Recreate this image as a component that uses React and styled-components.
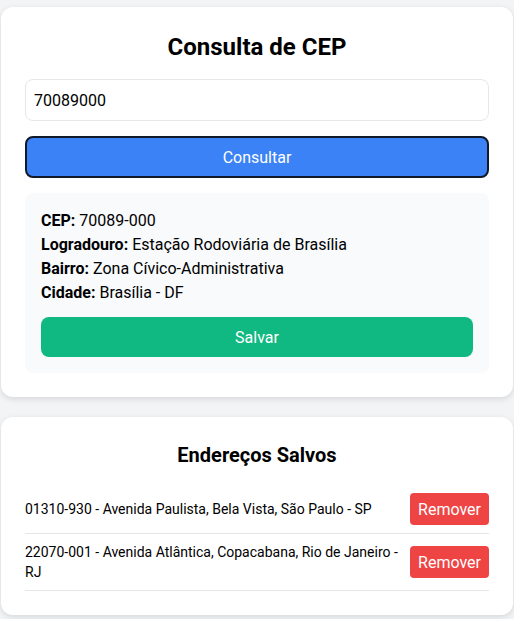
import React, { useState } from "react";
import styled, { createGlobalStyle } from "styled-components";

const Global = createGlobalStyle`
  html, body { margin: 0; padding: 0; background: #f3f4f6; }
  body { font-family: Roboto, "Liberation Sans", sans-serif; color: #000; }
  * { box-sizing: border-box; }
`;

const Page = styled.div`
  max-width: 512px;
  margin: 0 auto;
  padding: 7px 0;
  display: flex;
  flex-direction: column;
  gap: 20px;
`;

const Card = styled.section`
  background: #fff;
  border-radius: 12px;
  box-shadow: 0 2px 6px rgba(0, 0, 0, 0.12);
  padding: 24px;
  display: flex;
  flex-direction: column;
`;

const Title = styled.h1`
  margin: 0 0 ${(p) => p.$gap}px;
  font-size: ${(p) => p.$size}px;
  line-height: ${(p) => p.$lh}px;
  font-weight: 700;
  text-align: center;
`;

const Input = styled.input`
  width: 100%;
  height: 42px;
  padding: 8px;
  font: inherit;
  font-size: 16px;
  line-height: 24px;
  border: 1px solid #e5e7eb;
  border-radius: 8px;
  color: #000;
  outline: none;
`;

const Button = styled.button`
  width: ${(p) => (p.$auto ? "auto" : "100%")};
  height: ${(p) => p.$h}px;
  padding: 0 ${(p) => (p.$auto ? 8 : 12)}px;
  font: inherit;
  font-size: 16px;
  color: #fff;
  background: ${(p) => p.$bg};
  border: ${(p) => (p.$focus ? "2px solid #111827" : "none")};
  border-radius: ${(p) => p.$r}px;
  cursor: pointer;
  flex-shrink: 0;
`;

const Result = styled.div`
  margin-top: 15px;
  background: #f8fafc;
  border-radius: 8px;
  padding: 16px;
  display: flex;
  flex-direction: column;
`;

const Line = styled.p`
  margin: 0;
  font-size: 16px;
  line-height: 24px;
  b { font-weight: 700; }
`;

const SaveWrap = styled.div`
  margin-top: 12px;
`;

const Spacer = styled.div`
  height: ${(p) => p.$h}px;
`;

const List = styled.ul`
  list-style: none;
  margin: 0;
  padding: 0;
`;

const Row = styled.li`
  display: flex;
  align-items: center;
  justify-content: space-between;
  gap: 8px;
  padding: 8px 0;
  border-bottom: 1px solid #e5e7eb;
`;

const RowText = styled.span`
  font-size: 14px;
  line-height: 20px;
  flex: 1;
`;

export default function App() {
  const [cep, setCep] = useState("70089000");
  const saved = [
    "01310-930 - Avenida Paulista, Bela Vista, São Paulo - SP",
    "22070-001 - Avenida Atlântica, Copacabana, Rio de Janeiro - RJ",
  ];
  return (
    <>
      <Global />
      <Page>
        <Card>
          <Title $size={24} $lh={32} $gap={16}>Consulta de CEP</Title>
          <Input value={cep} onChange={(e) => setCep(e.target.value)} />
          <Spacer $h={15} />
          <Button $bg="#3b82f6" $h={42} $r={8} $focus>Consultar</Button>
          <Result>
            <Line><b>CEP:</b> 70089-000</Line>
            <Line><b>Logradouro:</b> Estação Rodoviária de Brasília</Line>
            <Line><b>Bairro:</b> Zona Cívico-Administrativa</Line>
            <Line><b>Cidade:</b> Brasília - DF</Line>
            <SaveWrap>
              <Button $bg="#10b981" $h={40} $r={8}>Salvar</Button>
            </SaveWrap>
          </Result>
        </Card>
        <Card>
          <Title as="h2" $size={20} $lh={28} $gap={16}>Endereços Salvos</Title>
          <List>
            {saved.map((s) => (
              <Row key={s}>
                <RowText>{s}</RowText>
                <Button $auto $bg="#ef4444" $h={32} $r={4}>Remover</Button>
              </Row>
            ))}
          </List>
        </Card>
      </Page>
    </>
  );
}
